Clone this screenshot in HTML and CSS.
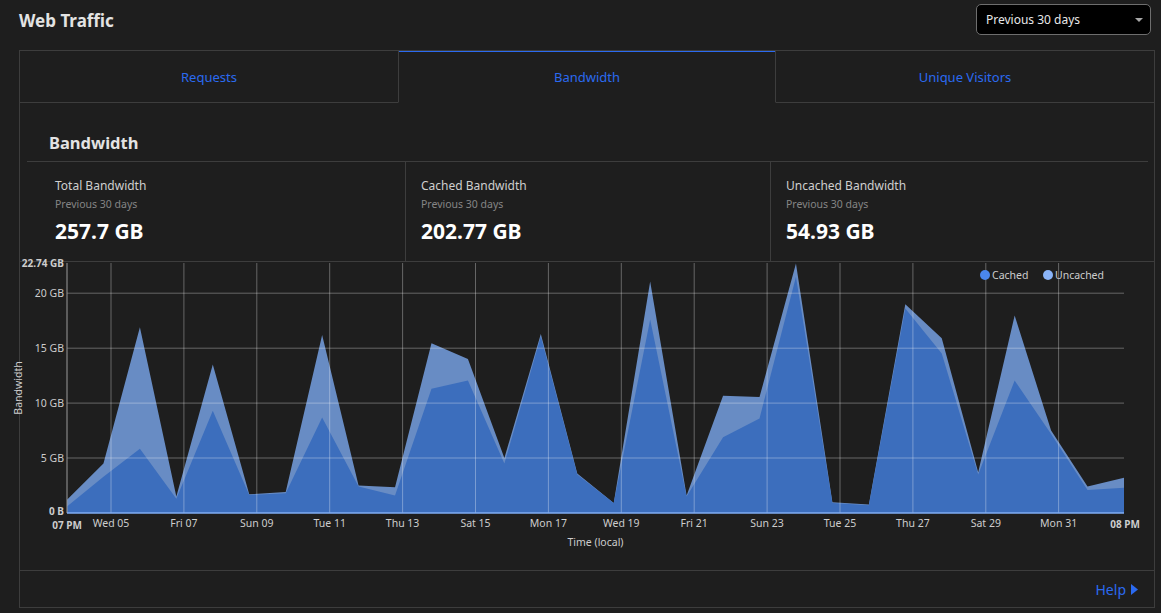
FILE: index.html
```html
<!DOCTYPE html>
<html lang="en">
<head>
<meta charset="utf-8">
<title>Web Traffic</title>
<link rel="stylesheet" href="styles.css">
</head>
<body>
<header class="topbar">
  <h1 class="title">Web Traffic</h1>
  <div class="select">
    <span class="select-text">Previous 30 days</span>
    <span class="caret"></span>
  </div>
</header>

<section class="panel">
  <nav class="tabs">
    <div class="tab">Requests</div>
    <div class="tab active">Bandwidth</div>
    <div class="tab">Unique Visitors</div>
  </nav>

  <div class="content">
    <h2 class="heading">Bandwidth</h2>
    <div class="stats">
      <div class="stat">
        <div class="stat-label">Total Bandwidth</div>
        <div class="stat-sub">Previous 30 days</div>
        <div class="stat-value">257.7 GB</div>
      </div>
      <div class="stat">
        <div class="stat-label">Cached Bandwidth</div>
        <div class="stat-sub">Previous 30 days</div>
        <div class="stat-value">202.77 GB</div>
      </div>
      <div class="stat">
        <div class="stat-label">Uncached Bandwidth</div>
        <div class="stat-sub">Previous 30 days</div>
        <div class="stat-value">54.93 GB</div>
      </div>
    </div>
  </div>

  <div class="chart">
    <svg class="chart-svg" width="1135" height="308" viewBox="0 0 1135 308">
      <polygon class="area-total" points="47,251 47,237.8 83.45,201.5 119.9,65.3 156.34,234.5 192.79,102.6 229.24,232.3 265.69,230.1 302.14,73.0 338.58,223.5 375.03,225.2 411.48,81.2 447.93,97.1 484.38,196 520.82,71.9 557.27,211.4 593.72,241.1 630.17,19.6 666.62,233.4 703.06,133.7 739.51,135.1 775.96,1.5 812.41,240.3 848.86,242.6 885.3,42.2 921.75,76.3 958.2,210.3 994.65,53.5 1031.1,168.6 1067.54,224.6 1104,215.8 1104,251"/>
      <polygon class="area-cached" points="47,251 47,244.4 83.45,214.7 119.9,186.7 156.34,236.7 192.79,148.8 229.24,232.9 265.69,231.2 302.14,155.4 338.58,224.6 375.03,233.4 411.48,126.8 447.93,118.6 484.38,201.5 520.82,74.6 557.27,212.5 593.72,241.1 630.17,57.6 666.62,234.5 703.06,175.2 739.51,156.5 775.96,14.7 812.41,241.1 848.86,243.3 885.3,46.6 921.75,91.6 958.2,212.5 994.65,118.5 1031.1,171.9 1067.54,227.9 1104,225.7 1104,251"/>

      <g class="grid">
        <line x1="47" y1="31.2" x2="1104" y2="31.2"/>
        <line x1="47" y1="86.2" x2="1104" y2="86.2"/>
        <line x1="47" y1="141.1" x2="1104" y2="141.1"/>
        <line x1="47" y1="196" x2="1104" y2="196"/>
        <line x1="91" y1="1" x2="91" y2="251"/>
        <line x1="163.9" y1="1" x2="163.9" y2="251"/>
        <line x1="236.8" y1="1" x2="236.8" y2="251"/>
        <line x1="309.7" y1="1" x2="309.7" y2="251"/>
        <line x1="382.6" y1="1" x2="382.6" y2="251"/>
        <line x1="455.5" y1="1" x2="455.5" y2="251"/>
        <line x1="528.4" y1="1" x2="528.4" y2="251"/>
        <line x1="601.3" y1="1" x2="601.3" y2="251"/>
        <line x1="674.2" y1="1" x2="674.2" y2="251"/>
        <line x1="747.1" y1="1" x2="747.1" y2="251"/>
        <line x1="820" y1="1" x2="820" y2="251"/>
        <line x1="892.9" y1="1" x2="892.9" y2="251"/>
        <line x1="965.8" y1="1" x2="965.8" y2="251"/>
        <line x1="1038.6" y1="1" x2="1038.6" y2="251"/>
      </g>
      <line class="axis-left" x1="47" y1="1" x2="47" y2="251"/>
      <line class="baseline" x1="47" y1="251" x2="1104" y2="251"/>

      <g class="ylabels">
        <text class="bold" x="44" y="4.5">22.74 GB</text>
        <text x="44" y="35">20 GB</text>
        <text x="44" y="90">15 GB</text>
        <text x="44" y="145">10 GB</text>
        <text x="44" y="200">5 GB</text>
        <text class="bold" x="44" y="252.5">0 B</text>
      </g>

      <g class="xlabels">
        <text class="bold" x="47" y="267">07 PM</text>
        <text x="91" y="265">Wed 05</text>
        <text x="163.9" y="265">Fri 07</text>
        <text x="236.8" y="265">Sun 09</text>
        <text x="309.7" y="265">Tue 11</text>
        <text x="382.6" y="265">Thu 13</text>
        <text x="455.5" y="265">Sat 15</text>
        <text x="528.4" y="265">Mon 17</text>
        <text x="601.3" y="265">Wed 19</text>
        <text x="674.2" y="265">Fri 21</text>
        <text x="747.1" y="265">Sun 23</text>
        <text x="820" y="265">Tue 25</text>
        <text x="892.9" y="265">Thu 27</text>
        <text x="965.8" y="265">Sat 29</text>
        <text x="1038.6" y="265">Mon 31</text>
        <text class="bold" x="1105" y="265.5">08 PM</text>
        <text x="575.5" y="284">Time (local)</text>
      </g>
      <text class="axis-title" transform="translate(2 126) rotate(-90)">Bandwidth</text>

      <g class="legend">
        <circle cx="965" cy="13" r="5" class="dot-cached"/>
        <text x="972" y="17">Cached</text>
        <circle cx="1028" cy="13" r="5" class="dot-uncached"/>
        <text x="1035" y="17">Uncached</text>
      </g>
    </svg>
  </div>

  <footer class="foot">
    <a class="help" href="#">Help
      <svg class="help-arrow" width="7" height="11" viewBox="0 0 7 11"><path d="M0 0 L7 5.5 L0 11 Z"/></svg>
    </a>
  </footer>
</section>
</body>
</html>
```

FILE: styles.css
```css
* { box-sizing: border-box; }

html, body {
  margin: 0;
  padding: 0;
  background: #1e1e1e;
  font-family: "Segoe UI", "Noto Sans", "Open Sans", sans-serif;
  color: #d6d6d6;
}

.topbar {
  display: flex;
  align-items: flex-start;
  justify-content: space-between;
  height: 40px;
  padding: 0 10px 0 19px;
}

.title {
  margin: 0;
  padding-top: 8px;
  font-size: 17px;
  line-height: 26px;
  font-weight: 700;
  color: #e3e3e3;
}

.select {
  margin-top: 4px;
  width: 175px;
  height: 31px;
  background: #000;
  border: 1px solid #6e6e6e;
  border-radius: 5px;
  display: flex;
  align-items: center;
  justify-content: space-between;
  padding: 0 7px 0 9px;
}

.select-text {
  font-size: 12px;
  color: #e8e8e8;
}

.caret {
  width: 0;
  height: 0;
  border-left: 4px solid transparent;
  border-right: 4px solid transparent;
  border-top: 4px solid #a8a8a8;
}

.panel {
  margin: 10px 6px 0 19px;
  border: 1px solid #3d3d3d;
  height: 558px;
  display: flex;
  flex-direction: column;
}

.tabs {
  display: grid;
  grid-template-columns: 1fr 1fr 1fr;
}

.tab {
  height: 52px;
  display: flex;
  align-items: center;
  justify-content: center;
  font-size: 13px;
  color: #2b6af0;
  border-bottom: 1px solid #3d3d3d;
}

.tab.active {
  border-left: 1px solid #3d3d3d;
  border-right: 1px solid #3d3d3d;
  border-bottom-color: transparent;
  box-shadow: inset 0 1px 0 #2b6af0;
}

.content {
  padding: 0 6px 0 7px;
}

.heading {
  margin: 0;
  padding: 28px 0 6px 22px;
  font-size: 16.5px;
  line-height: 24px;
  font-weight: 700;
  color: #e3e3e3;
  border-bottom: 1px solid #3d3d3d;
}

.stats {
  display: grid;
  grid-template-columns: 365px 365px 365px;
  padding: 0 13px;
  height: 99px;
}

.stat {
  padding: 15px 0 0 15px;
}

.stat + .stat {
  border-left: 1px solid #3d3d3d;
}

.stat-label {
  font-size: 12px;
  line-height: 18px;
  color: #cfcfcf;
}

.stat-sub {
  margin-top: 1px;
  font-size: 10.5px;
  line-height: 16px;
  color: #858585;
}

.stat-value {
  margin-top: 5px;
  font-size: 21px;
  line-height: 28px;
  font-weight: 700;
  color: #ffffff;
}

.chart {
  border-top: 1px solid #3d3d3d;
  height: 309px;
}

.chart-svg {
  display: block;
  overflow: visible;
  font-family: "Segoe UI", "Noto Sans", "Open Sans", sans-serif;
}

.area-total { fill: #688cc4; }
.area-cached { fill: #3c6ebd; }

.grid line {
  stroke: rgba(255, 255, 255, 0.32);
  stroke-width: 1;
}

.axis-left {
  stroke: #9a9a9a;
  stroke-width: 1;
}

.baseline {
  stroke: #80aef5;
  stroke-width: 1.5;
}

.ylabels text {
  font-size: 10.5px;
  fill: #cdcdcd;
  text-anchor: end;
}

.xlabels text {
  font-size: 10.5px;
  fill: #cdcdcd;
  text-anchor: middle;
}

.ylabels .bold,
.xlabels .bold {
  font-size: 10px;
  font-weight: 700;
}

.axis-title {
  font-size: 10.5px;
  fill: #cdcdcd;
  text-anchor: middle;
}

.legend text {
  font-size: 10.5px;
  fill: #cdcdcd;
}

.dot-cached { fill: #4a86ec; }
.dot-uncached { fill: #8ab4f8; }

.foot {
  flex: 1;
  border-top: 1px solid #3d3d3d;
  display: flex;
  align-items: center;
  justify-content: flex-end;
  padding-right: 16px;
}

.help {
  display: flex;
  align-items: center;
  gap: 5px;
  font-size: 14px;
  color: #2b6af0;
  text-decoration: none;
}

.help-arrow path { fill: #2b6af0; }
```
